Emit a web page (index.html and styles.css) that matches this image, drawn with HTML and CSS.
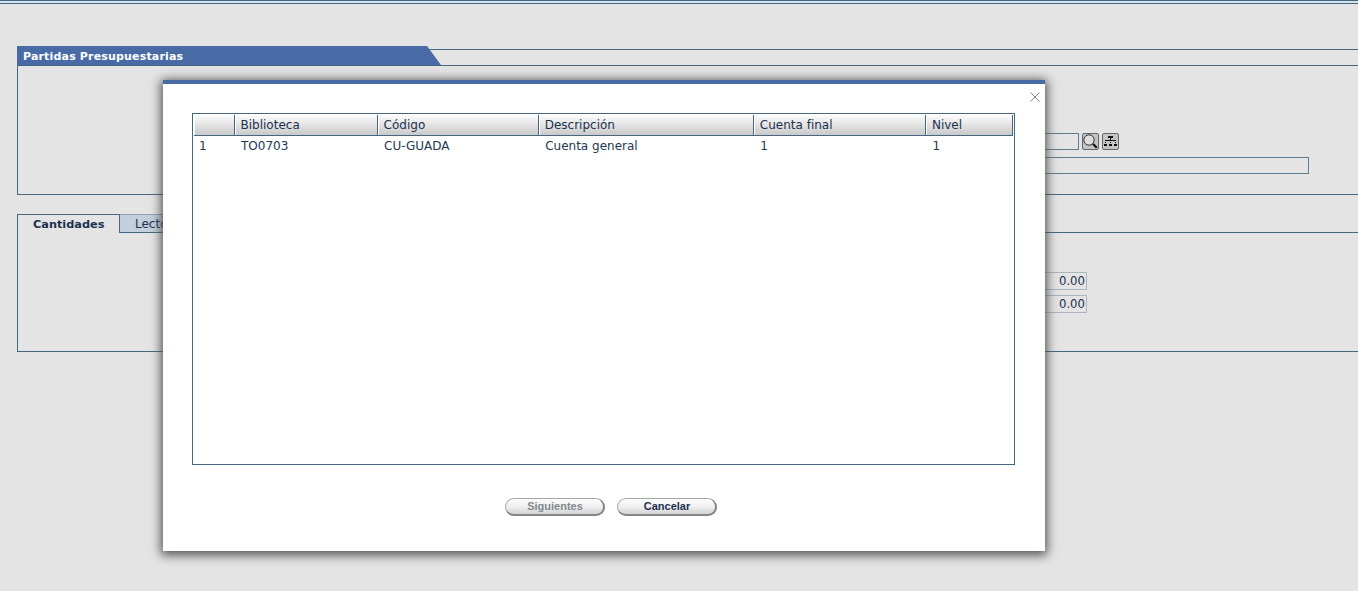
FILE: index.html
```html
<!DOCTYPE html>
<html lang="es">
<head>
    <meta charset="UTF-8">
    <title>Partidas Presupuestarias</title>
    <link rel="stylesheet" href="styles.css">
</head>
<body>
    <div class="top-bar"></div>

    <section class="panel panel-first">
        <div class="panel-head">
            <h2 class="panel-title">Partidas Presupuestarias</h2>
            <div class="panel-rest"></div>
        </div>
        <div class="panel-body body-search">
            <div class="field-row">
                <div class="field field-code"></div>
                <button class="icon-button" type="button">
                    <svg width="15" height="15" viewBox="0 0 15 15">
                        <circle cx="6" cy="6" r="5.2" fill="#dedede" stroke="#333" stroke-width="1"/>
                        <path d="M10 10L13.8 13.8" stroke="#111" stroke-width="2.2"/>
                    </svg>
                </button>
                <button class="icon-button" type="button">
                    <svg width="13" height="13" viewBox="0 0 13 13">
                        <path d="M4 1h5v2H4zM6 3h1v2H6zM1 5h11v1H1zM1 7h1v1H1zM6 7h1v1H6zM11 7h1v1h-1zM0 9h3v2H0zM5 9h3v2H5zM10 9h3v2h-3z" fill="#111"/>
                    </svg>
                </button>
            </div>
            <div class="field field-name"></div>
        </div>
    </section>

    <section class="panel panel-second">
        <div class="tabs">
            <div class="tab tab-active">Cantidades</div>
            <div class="tab">Lectores</div>
            <div class="tabs-rest"></div>
        </div>
        <div class="panel-body body-amounts">
            <div class="amount">0.00</div>
            <div class="amount">0.00</div>
        </div>
    </section>

    <div class="modal">
        <button class="modal-close" type="button">
            <svg width="10" height="10" viewBox="0 0 10 10">
                <path d="M0.5 0.5L9.5 9.5M9.5 0.5L0.5 9.5" stroke="#7d8489" stroke-width="1" fill="none"/>
            </svg>
        </button>
        <div class="grid-box">
            <table class="grid">
                <colgroup>
                    <col class="col-num">
                    <col class="col-lib">
                    <col class="col-code">
                    <col class="col-desc">
                    <col class="col-final">
                    <col class="col-level">
                </colgroup>
                <thead>
                    <tr>
                        <th></th>
                        <th>Biblioteca</th>
                        <th>Código</th>
                        <th>Descripción</th>
                        <th>Cuenta final</th>
                        <th>Nivel</th>
                    </tr>
                </thead>
                <tbody>
                    <tr>
                        <td>1</td>
                        <td>TO0703</td>
                        <td>CU-GUADA</td>
                        <td>Cuenta general</td>
                        <td>1</td>
                        <td>1</td>
                    </tr>
                </tbody>
            </table>
        </div>
        <div class="modal-actions">
            <button class="button" type="button" disabled>Siguientes</button>
            <button class="button" type="button">Cancelar</button>
        </div>
    </div>
</body>
</html>
```

FILE: styles.css
```css
html, body {
    height: 100%;
}
body {
    margin: 0;
    background-color: #e4e4e4;
    color: #1c3150;
    font-family: "DejaVu Sans", Verdana, sans-serif;
    font-size: 12px;
    overflow: hidden;
}
.top-bar {
    height: 2px;
    background-color: #d3e3ee;
    border-top: 1px solid #45677f;
    border-bottom: 1px solid #45677f;
}
.panel {
    margin-left: 17px;
    margin-right: -20px;
}
.panel-first {
    margin-top: 42px;
}
.panel-second {
    margin-top: 19px;
}
.panel-head {
    display: flex;
    height: 19px;
}
.panel-title {
    width: 424px;
    margin: 0;
    padding: 3px 0 0 6px;
    box-sizing: border-box;
    background-color: #486ba6;
    color: #fff;
    font-size: 11px;
    line-height: 16px;
    letter-spacing: 0.17px;
    font-weight: bold;
    clip-path: polygon(0 0, 410px 0, 424px 100%, 0 100%);
}
.panel-rest {
    flex: 1;
    margin-top: 3px;
    margin-left: -14px;
    border-top: 1px solid #45677f;
}
.panel-body {
    box-sizing: border-box;
    border: 1px solid #45677f;
}
.body-search {
    height: 130px;
    padding: 67px 0 0 880px;
}
.field {
    box-sizing: border-box;
    border: 1px solid #5d7c95;
}
.field-row {
    display: flex;
    align-items: flex-start;
    gap: 3px;
    margin-bottom: 7px;
}
.field-code {
    width: 181px;
    height: 17px;
}
.field-name {
    width: 411px;
    height: 17px;
}
.icon-button {
    display: flex;
    align-items: center;
    justify-content: center;
    box-sizing: border-box;
    width: 17px;
    height: 17px;
    padding: 0;
    border: 1px solid #666;
    border-radius: 2px;
    background-color: #c4c4c4;
}
.tabs {
    display: flex;
    height: 19px;
}
.tab {
    box-sizing: border-box;
    width: 103px;
    height: 19px;
    padding-left: 15px;
    border: 1px solid #8ea3b5;
    border-left: none;
    border-bottom: 1px solid #45677f;
    background-color: #c3cfda;
    line-height: 19px;
}
.tab-active {
    padding-left: 15px;
    border: 1px solid #45677f;
    border-bottom: none;
    background-color: #e4e4e4;
    font-size: 11.3px;
    font-weight: bold;
}
.tabs-rest {
    flex: 1;
    border-bottom: 1px solid #45677f;
}
.body-amounts {
    height: 120px;
    margin-top: -1px;
    border-top: none;
    padding: 40px 0 0 900px;
}
.amount {
    box-sizing: border-box;
    width: 169px;
    height: 18px;
    margin-bottom: 5px;
    padding-right: 1px;
    border: 1px solid #a9b6c2;
    font-size: 11.7px;
    line-height: 17px;
    text-align: right;
}
.modal {
    position: absolute;
    top: 80px;
    left: 163px;
    box-sizing: border-box;
    width: 882px;
    height: 471px;
    padding: 29px 30px 0 29px;
    background-color: #fff;
    border-top: 4px solid #486ba6;
    box-shadow: 0 2px 10px 2px #4f4f4f;
}
.modal-close {
    position: absolute;
    top: 8px;
    right: 5px;
    padding: 0;
    border: none;
    background: none;
    line-height: 0;
}
.grid-box {
    box-sizing: border-box;
    height: 352px;
    padding: 1px;
    border: 1px solid #45677f;
}
.grid {
    table-layout: fixed;
    width: 819px;
    border-collapse: collapse;
}
.col-num { width: 40px; }
.col-lib { width: 143px; }
.col-code { width: 161px; }
.col-desc { width: 215px; }
.col-final { width: 172px; }
.col-level { width: 87px; }
.grid th {
    box-sizing: border-box;
    height: 20px;
    padding: 0 0 0 6px;
    border-right: 1px solid #45677f;
    border-bottom: 1px solid #45677f;
    box-shadow: inset 1px 0 0 #fff;
    background: linear-gradient(#fcfcfc, #c9c9c9);
    font-weight: normal;
    text-align: left;
}
.grid td {
    height: 20px;
    padding: 0 0 0 7px;
    color: #24384f;
}
.grid td:first-child {
    padding-left: 5px;
}
.modal-actions {
    display: flex;
    justify-content: center;
    gap: 12px;
    margin-top: 33px;
    padding-left: 14px;
}
.button {
    box-sizing: border-box;
    width: 100px;
    height: 18px;
    padding: 0 0 2px 2px;
    border: 1px solid #a8a8a8;
    border-right: 2px solid #858585;
    border-bottom: 2px solid #858585;
    border-radius: 9px;
    background: linear-gradient(#fbfbfb, #f2f2f2 45%, #d4d4d4);
    color: #1c3150;
    font-family: "Liberation Sans", Arial, sans-serif;
    font-size: 11px;
    font-weight: bold;
}
.button:disabled {
    color: #83898f;
}
```
